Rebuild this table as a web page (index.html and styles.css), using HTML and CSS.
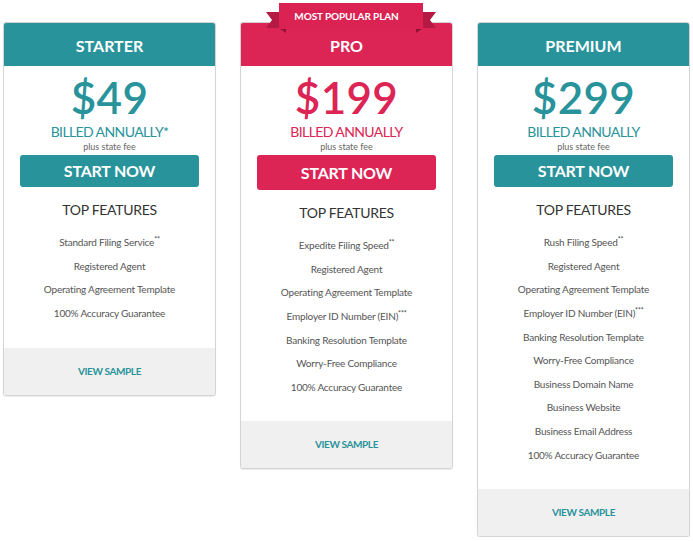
FILE: index.html
```html
<!DOCTYPE html>
<html>
<head>
<meta charset="utf-8">
<link rel="stylesheet" href="styles.css">
</head>
<body>
<div class="plans">
  <div class="card teal">
    <div class="head">STARTER</div>
    <div class="price">$49</div>
    <div class="billed">BILLED ANNUALLY*</div>
    <div class="fee">plus state fee</div>
    <a class="btn">START NOW</a>
    <div class="top">TOP FEATURES</div>
    <ul class="feats">
      <li>Standard Filing Service<sup>**</sup></li>
      <li>Registered Agent</li>
      <li>Operating Agreement Template</li>
      <li>100% Accuracy Guarantee</li>
    </ul>
    <div class="foot">VIEW SAMPLE</div>
  </div>
  <div class="card pink">
    <svg class="ribbon" width="170" height="32" viewBox="0 0 170 32">
      <polygon points="0,9 20,9 20,25 0,25 6,17" fill="#b51a45"/>
      <polygon points="170,9 150,9 150,25 170,25 164,17" fill="#b51a45"/>
      <polygon points="13,25 20,25 20,30" fill="#8e1234"/>
      <polygon points="157,25 150,25 150,30" fill="#8e1234"/>
      <rect x="13" y="0" width="144" height="26" fill="#da2353"/>
    </svg>
    <div class="ribbon-text">MOST POPULAR PLAN</div>
    <div class="head">PRO</div>
    <div class="price">$199</div>
    <div class="billed">BILLED ANNUALLY</div>
    <div class="fee">plus state fee</div>
    <a class="btn big">START NOW</a>
    <div class="top">TOP FEATURES</div>
    <ul class="feats">
      <li>Expedite Filing Speed<sup>**</sup></li>
      <li>Registered Agent</li>
      <li>Operating Agreement Template</li>
      <li>Employer ID Number (EIN)<sup>***</sup></li>
      <li>Banking Resolution Template</li>
      <li>Worry-Free Compliance</li>
      <li>100% Accuracy Guarantee</li>
    </ul>
    <div class="foot">VIEW SAMPLE</div>
  </div>
  <div class="card teal">
    <div class="head">PREMIUM</div>
    <div class="price">$299</div>
    <div class="billed">BILLED ANNUALLY</div>
    <div class="fee">plus state fee</div>
    <a class="btn">START NOW</a>
    <div class="top">TOP FEATURES</div>
    <ul class="feats">
      <li>Rush Filing Speed<sup>**</sup></li>
      <li>Registered Agent</li>
      <li>Operating Agreement Template</li>
      <li>Employer ID Number (EIN)<sup>***</sup></li>
      <li>Banking Resolution Template</li>
      <li>Worry-Free Compliance</li>
      <li>Business Domain Name</li>
      <li>Business Website</li>
      <li>Business Email Address</li>
      <li>100% Accuracy Guarantee</li>
    </ul>
    <div class="foot">VIEW SAMPLE</div>
  </div>
</div>
</body>
</html>
```
FILE: styles.css
```css
* { box-sizing: border-box; }
html, body { margin: 0; padding: 0; background: #fff; }
body { font-family: Lato, "Open Sans", sans-serif; }

.plans {
  display: flex;
  align-items: flex-start;
  gap: 24px;
  padding: 22px 0 0 3px;
}

.card {
  position: relative;
  width: 213px;
  border: 1px solid #d4d4d4;
  border-radius: 3px;
  box-shadow: 0 1px 1px rgba(0,0,0,0.08);
  background: #fff;
  text-align: center;
  --c: #28939b;
}
.card.pink { --c: #dc2455; }

.head {
  height: 43px;
  line-height: 45px;
  background: var(--c);
  color: #fff;
  font-weight: 700;
  font-size: 16px;
  border-radius: 2px 2px 0 0;
}

.price {
  margin-top: 9px;
  font-size: 44px;
  line-height: 44px;
  font-weight: 600;
  color: var(--c);
  letter-spacing: 0.3px;
}
.billed {
  margin-top: 5px;
  font-size: 14px;
  line-height: 16px;
  color: var(--c);
  letter-spacing: -0.6px;
}
.fee {
  font-size: 9px;
  line-height: 11px;
  color: #666;
  margin-top: 1px;
}

.btn {
  display: block;
  margin: 3px 16px 0;
  height: 32px;
  line-height: 32px;
  background: var(--c);
  color: #fff;
  font-weight: 700;
  font-size: 16px;
  border-radius: 3px;
  letter-spacing: -0.2px;
}
.btn.big { height: 35px; line-height: 35px; }

.top {
  margin-top: 13px;
  height: 20px;
  line-height: 20px;
  font-size: 14px;
  color: #333;
  letter-spacing: -0.3px;
}

.feats {
  list-style: none;
  margin: 11px 0 0;
  padding: 0 0 22px;
}
.feats li {
  font-size: 10px;
  line-height: 23.65px;
  height: 23.65px;
  color: #555;
  letter-spacing: -0.2px;
}
.feats sup {
  font-size: 7px;
  line-height: 0;
  vertical-align: 4px;
  color: #444;
}

.foot {
  height: 47px;
  line-height: 47px;
  background: #f0f0f0;
  color: #28939b;
  font-weight: 700;
  font-size: 10px;
  letter-spacing: -0.4px;
  border-radius: 0 0 2px 2px;
}

.ribbon {
  position: absolute;
  left: 25px;
  top: -20px;
}
.ribbon-text {
  position: absolute;
  left: 0;
  right: 0;
  top: -13px;
  font-size: 10px;
  line-height: 12px;
  font-weight: 700;
  color: #fff;
  letter-spacing: -0.1px;
}
```
